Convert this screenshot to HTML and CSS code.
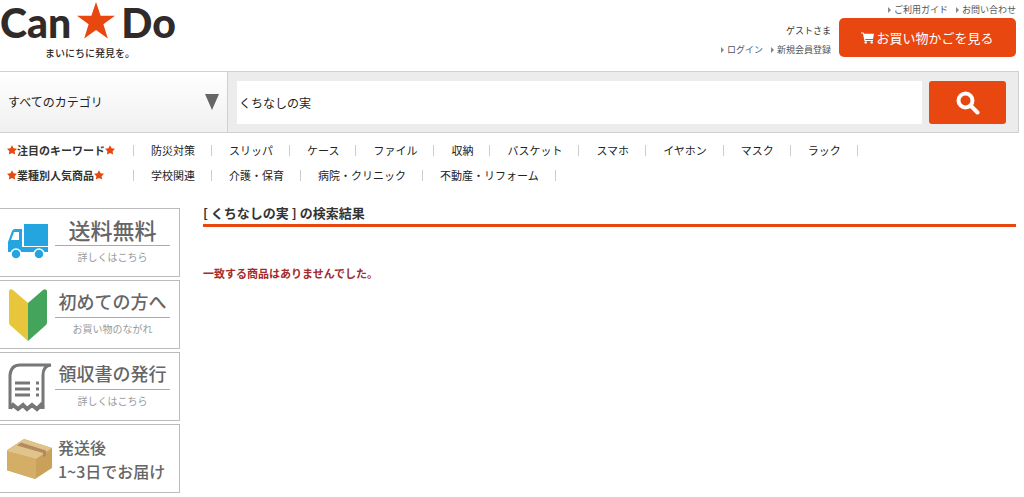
FILE: index.html
```html
<!DOCTYPE html>
<html lang="ja">
<head>
<meta charset="utf-8">
<meta name="viewport" content="width=device-width, initial-scale=1">
<title>Can★Do</title>
<link rel="stylesheet" href="styles.css">
</head>
<body>
<header class="header">
  <a class="logo" href="#">
    <span class="logo-name">Can<svg class="logo-star" viewBox="0 0 38 37" aria-hidden="true"><path d="M19 0l4.600 13.700H38L26.400 22.300l4.400 14.200L19 28 7.200 36.500l4.400-14.200L0 13.700h14.400z"/></svg>Do</span>
    <span class="tagline">まいにちに発見を。</span>
  </a>
  <div class="header-side">
    <nav class="links"><a href="#">ご利用ガイド</a><a href="#">お問い合わせ</a></nav>
    <div class="account-row">
      <div class="account">
        <span class="guest">ゲストさま</span>
        <nav class="links"><a href="#">ログイン</a><a href="#">新規会員登録</a></nav>
      </div>
      <a class="cart" href="#">
        <svg class="cart-icon" viewBox="0 0 13 12" aria-hidden="true"><path d="M0 .5h2.600l.4 1.300H13L12 7H4.200l.2 1H12v1H3.500L1.900 1.500H0z"/><circle cx="4.700" cy="10.400" r="1.200"/><circle cx="10.700" cy="10.400" r="1.200"/></svg>
        <span>お買い物かごを見る</span>
      </a>
    </div>
  </div>
</header>

<form class="search">
  <div class="category">
    <select class="category-select" aria-label="カテゴリ"><option>すべてのカテゴリ</option></select>
  </div>
  <div class="search-body">
    <input class="search-input" type="text" aria-label="キーワード" value="くちなしの実">
    <button class="search-button" type="button" aria-label="検索">
      <svg class="search-icon" viewBox="0 0 24 24" aria-hidden="true"><circle cx="9.500" cy="9.500" r="7"/><path d="M15 15l6.500 6.500"/></svg>
    </button>
  </div>
</form>

<nav class="keywords">
  <div class="keyword-row">
    <strong class="keyword-title"><svg class="star" viewBox="0 0 38 37" aria-hidden="true"><path d="M19 0l6 12 13 2-9 9 2 13-12-6-12 6 2-13-9-9 13-2z"/></svg>注目のキーワード<svg class="star" viewBox="0 0 38 37" aria-hidden="true"><path d="M19 0l6 12 13 2-9 9 2 13-12-6-12 6 2-13-9-9 13-2z"/></svg></strong>
    <ul class="keyword-list">
      <li><a href="#">防災対策</a></li><li><a href="#">スリッパ</a></li><li><a href="#">ケース</a></li><li><a href="#">ファイル</a></li><li><a href="#">収納</a></li><li><a href="#">バスケット</a></li><li><a href="#">スマホ</a></li><li><a href="#">イヤホン</a></li><li><a href="#">マスク</a></li><li><a href="#">ラック</a></li>
    </ul>
  </div>
  <div class="keyword-row">
    <strong class="keyword-title"><svg class="star" viewBox="0 0 38 37" aria-hidden="true"><path d="M19 0l6 12 13 2-9 9 2 13-12-6-12 6 2-13-9-9 13-2z"/></svg>業種別人気商品<svg class="star" viewBox="0 0 38 37" aria-hidden="true"><path d="M19 0l6 12 13 2-9 9 2 13-12-6-12 6 2-13-9-9 13-2z"/></svg></strong>
    <ul class="keyword-list">
      <li><a href="#">学校関連</a></li><li><a href="#">介護・保育</a></li><li><a href="#">病院・クリニック</a></li><li><a href="#">不動産・リフォーム</a></li>
    </ul>
  </div>
</nav>

<div class="content">
  <aside class="banners">
    <a class="banner" href="#">
      <svg class="banner-icon" viewBox="0 0 48 56" aria-hidden="true"><g fill="#25a5e0"><path d="M17 9h24v22H17z"/><path d="M8 14h7v18h26v5H1V27l4-11q1-2 3-2z"/><circle cx="9" cy="39" r="5" stroke="#fff" stroke-width="1.500"/><circle cx="32" cy="39" r="5" stroke="#fff" stroke-width="1.500"/></g><path d="M7 17h5v8H4z" fill="#fff"/></svg>
      <span class="banner-text"><span class="banner-title banner-title-large">送料無料</span><span class="banner-note">詳しくはこちら</span></span>
    </a>
    <a class="banner" href="#">
      <svg class="banner-icon" viewBox="0 0 48 56" aria-hidden="true"><path d="M2 4q1-3 4-1l15 13v38L3 38q-1-1-1-3z" fill="#e8c63c"/><path d="M40 4q-1-3-4-1L21 16v38l18-16q1-1 1-3z" fill="#45a45c"/></svg>
      <span class="banner-text"><span class="banner-title">初めての方へ</span><span class="banner-note">お買い物のながれ</span></span>
    </a>
    <a class="banner" href="#">
      <svg class="banner-icon" viewBox="0 0 48 56" aria-hidden="true"><g fill="none" stroke="#777" stroke-width="3"><path d="M3 50V16Q4 6 13 6h31Q36 7 36 16v34"/><path d="M3 49l3-3 5 4 5-4 4 4 5-4 5 4 4-4 2 3" stroke-width="4"/><path d="M8 24h15M8 30h15M8 36h15M29 24h3M29 30h3M29 36h3"/></g></svg>
      <span class="banner-text"><span class="banner-title">領収書の発行</span><span class="banner-note">詳しくはこちら</span></span>
    </a>
    <a class="banner" href="#">
      <svg class="banner-icon" viewBox="0 0 48 56" aria-hidden="true"><path d="M-1 20L17 8l28 9v20L28 48l-29-9z" fill="#c9a15a"/><path d="M-1 20L17 8l28 9-16 11z" fill="#e0c48c"/><path d="M-1 20l30 8v20l-30-9z" fill="#d4ae66"/><path d="M10 14.500l4-3 25 8v5l-3 2v-4.500z" fill="#b58a5e"/></svg>
      <span class="banner-text banner-delivery"><span>発送後</span><span>1~3日でお届け</span></span>
    </a>
  </aside>
  <main class="results">
    <h1 class="results-title">[ くちなしの実 ] の検索結果</h1>
    <p class="results-empty">一致する商品はありませんでした。</p>
  </main>
</div>
</body>
</html>
```
FILE: styles.css
```css
* { box-sizing: border-box; }

body {
  margin: 0;
  background: #fff;
  color: #333;
  font: 11px/16px "Noto Sans CJK JP", sans-serif;
}

a { color: inherit; text-decoration: none; }
svg { display: block; flex: none; }

.header {
  display: flex;
  justify-content: space-between;
  min-height: 71px;
  padding-right: 8px;
}

.logo { display: flex; flex-direction: column; width: 184px; color: #302a29; }
.logo-name {
  display: flex;
  align-items: center;
  height: 46px;
  font: 900 41px/46px Lato, sans-serif;
}
.logo-star { width: 38px; height: 37px; margin: 0 6px 6px; fill: #e94710; }
.tagline { padding-left: 45px; font-size: 10px; font-weight: 500; line-height: 14px; }

.header-side { display: flex; flex-direction: column; align-items: flex-end; padding-top: 2px; }
.links { display: flex; gap: 8px; font-size: 9px; color: #555; }
.links a { display: flex; align-items: center; gap: 3px; }
.links a::before {
  content: "";
  border: 3px solid transparent;
  border-left-color: #888;
  border-right-width: 0;
}
.account-row { display: flex; gap: 8px; }
.account { display: flex; flex-direction: column; align-items: flex-end; gap: 3px; padding-top: 5px; }
.guest { font-size: 9px; }
.cart {
  display: flex;
  align-items: center;
  justify-content: center;
  gap: 2px;
  width: 177px;
  height: 39px;
  border-radius: 5px;
  background: #e94710;
  color: #fff;
  font-size: 13px;
}
.cart-icon { width: 13px; height: 12px; fill: #fff; }

.search {
  display: flex;
  height: 62px;
  margin-right: 5px;
  border: solid #d0d0d0;
  border-width: 1px 1px 1px 0;
  background: #ececec;
}
.category {
  display: flex;
  align-items: center;
  width: 228px;
  padding-right: 8px;
  border-right: 1px solid #d0d0d0;
  background: linear-gradient(#fff, #f0f0f0);
}
.category::after {
  content: "";
  border: solid transparent;
  border-width: 16px 7px 0;
  border-top-color: #666;
}
.category-select {
  flex: 1;
  height: 60px;
  padding: 0 8px;
  border: 0;
  appearance: none;
  background: transparent;
  color: #222;
  font: inherit;
  font-size: 12px;
}
.search-body { display: flex; flex: 1; gap: 7px; padding: 9px 12px 8px 9px; }
.search-input {
  flex: 1;
  min-width: 0;
  padding: 0 2px;
  border: 0;
  background: #fff;
  color: #222;
  font: inherit;
  font-size: 12px;
}
.search-button {
  display: flex;
  align-items: center;
  justify-content: center;
  width: 77px;
  padding: 0;
  border: 0;
  border-radius: 3px;
  background: #e94710;
}
.search-icon { width: 24px; height: 24px; fill: none; stroke: #fff; stroke-width: 4; stroke-linecap: round; }

.keywords { display: flex; flex-direction: column; gap: 9px; padding: 9px 0 24px 7px; }
.keyword-row { display: flex; color: #222; }
.keyword-title { display: flex; align-items: center; width: 126px; color: #333; }
.star { width: 10px; height: 10px; fill: #e94710; }
.keyword-list { display: flex; flex-wrap: wrap; margin: 0; padding: 0; list-style: none; }
.keyword-list li { display: flex; align-items: center; padding-left: 17px; }
.keyword-list li::after { content: ""; width: 1px; height: 11px; margin-left: 16px; background: #ccc; }
.keyword-list li:first-child::before { content: ""; width: 1px; height: 11px; margin: 0 17px 0 -17px; background: #ccc; }

.content { display: flex; gap: 23px; padding-right: 8px; }
.banners { display: flex; flex-direction: column; gap: 3px; width: 180px; padding-top: 1px; }
.banner {
  display: flex;
  align-items: center;
  height: 69px;
  padding-left: 7px;
  border: solid #bbb;
  border-width: 1px 1px 1px 0;
  color: #666;
}
.banner-icon { width: 48px; height: 56px; }
.banner-text { display: flex; flex-direction: column; width: 115px; text-align: center; }
.banner-title {
  height: 31px;
  border-bottom: 1px solid #aaa;
  font-size: 18px;
  font-weight: 500;
  line-height: 28px;
}
.banner-title-large { font-size: 22px; }
.banner-note { height: 24px; color: #999; font-size: 10px; line-height: 22px; }
.banner-delivery {
  padding-left: 3px;
  font-size: 16px;
  font-weight: 500;
  line-height: 24px;
  text-align: left;
  white-space: nowrap;
}

.results { flex: 1; }
.results-title {
  margin: 0;
  padding-bottom: 5px;
  border-bottom: 3px solid #e94710;
  font-size: 13px;
  line-height: 12px;
}
.results-empty { margin: 38px 0 0; color: #a52a2a; font-weight: 700; }
```
